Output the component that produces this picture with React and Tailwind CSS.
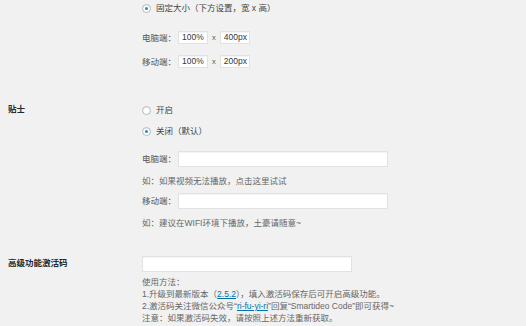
import React from "react";

const FONT = { fontFamily: '"Liberation Sans", "Noto Sans CJK SC", sans-serif' };

function Radio({ checked, label }) {
  return (
    <div className="flex items-center h-[12px]">
      <span className="w-[9px] h-[9px] rounded-full border border-[#b4b9be] bg-white flex items-center justify-center shadow-[inset_0_1px_1px_rgba(0,0,0,0.08)]">
        {checked && <span className="w-[3px] h-[3px] rounded-full bg-[#1e8cbe]" />}
      </span>
      <span className="ml-[5px] text-[8.5px] leading-[12px] text-[#444]">{label}</span>
    </div>
  );
}

function Input({ w, h, value }) {
  return (
    <div
      className={`${w} ${h} bg-white border border-[#e2e2e2] shadow-[inset_0_1px_1px_rgba(0,0,0,0.05)] flex items-center pl-[3px] text-[8.5px] text-[#32373c]`}
    >
      {value}
    </div>
  );
}

function Label({ children }) {
  return <span className="w-[36px] text-[8.5px] leading-[12px] text-[#555]">{children}</span>;
}

export default function App() {
  return (
    <div className="w-[526px] h-[326px] bg-[#f1f1f1] overflow-hidden" style={FONT}>
      {/* section 1 */}
      <div className="grid grid-cols-[142px_1fr] pt-[2px]">
        <div />
        <div className="flex flex-col">
          <Radio checked label="固定大小（下方设置，宽 x 高）" />
          <div className="flex items-center mt-[17px]">
            <Label>电脑端：</Label>
            <Input w="w-[30px]" h="h-[13px]" value="100%" />
            <span className="mx-[4px] text-[7.5px] text-[#555]">x</span>
            <Input w="w-[30px]" h="h-[13px]" value="400px" />
          </div>
          <div className="flex items-center mt-[11px]">
            <Label>移动端：</Label>
            <Input w="w-[30px]" h="h-[13px]" value="100%" />
            <span className="mx-[4px] text-[7.5px] text-[#555]">x</span>
            <Input w="w-[30px]" h="h-[13px]" value="200px" />
          </div>
        </div>
      </div>

      {/* section 2 */}
      <div className="grid grid-cols-[142px_1fr] mt-[36px]">
        <div className="pl-[8px] text-[8.5px] leading-[12px] font-bold text-[#23282d] -mt-[1px]">贴士</div>
        <div className="flex flex-col">
          <Radio label="开启" />
          <div className="mt-[9px]">
            <Radio checked label="关闭（默认）" />
          </div>
          <div className="flex items-center mt-[14px]">
            <Label>电脑端：</Label>
            <Input w="w-[210px]" h="h-[16px]" value="" />
          </div>
          <div className="mt-[8px] text-[8.5px] leading-[12px] text-[#666]">如：如果视频无法播放，点击这里试试</div>
          <div className="flex items-center mt-[6px]">
            <Label>移动端：</Label>
            <Input w="w-[210px]" h="h-[16px]" value="" />
          </div>
          <div className="mt-[8px] text-[8.5px] leading-[12px] text-[#666]">如：建议在WIFI环境下播放，土豪请随意~</div>
        </div>
      </div>

      {/* section 3 */}
      <div className="grid grid-cols-[142px_1fr] mt-[27px]">
        <div className="pl-[8px] pt-[1px] text-[8.5px] leading-[12px] font-bold text-[#23282d]">高级功能激活码</div>
        <div className="flex flex-col">
          <Input w="w-[210px]" h="h-[16px]" value="" />
          <div className="mt-[4px] text-[8.5px] leading-[12px] text-[#666]">
            <div>使用方法：</div>
            <div>
              1.升级到最新版本（<span className="text-[#0073aa] underline">2.5.2</span>），填入激活码保存后可开启高级功能。
            </div>
            <div>
              2.激活码关注微信公众号“<span className="text-[#0073aa] underline">ri-fu-yi-ri</span>”回复“Smartideo Code”即可获得~
            </div>
            <div>注意：如果激活码失效，请按照上述方法重新获取。</div>
          </div>
        </div>
      </div>
    </div>
  );
}
